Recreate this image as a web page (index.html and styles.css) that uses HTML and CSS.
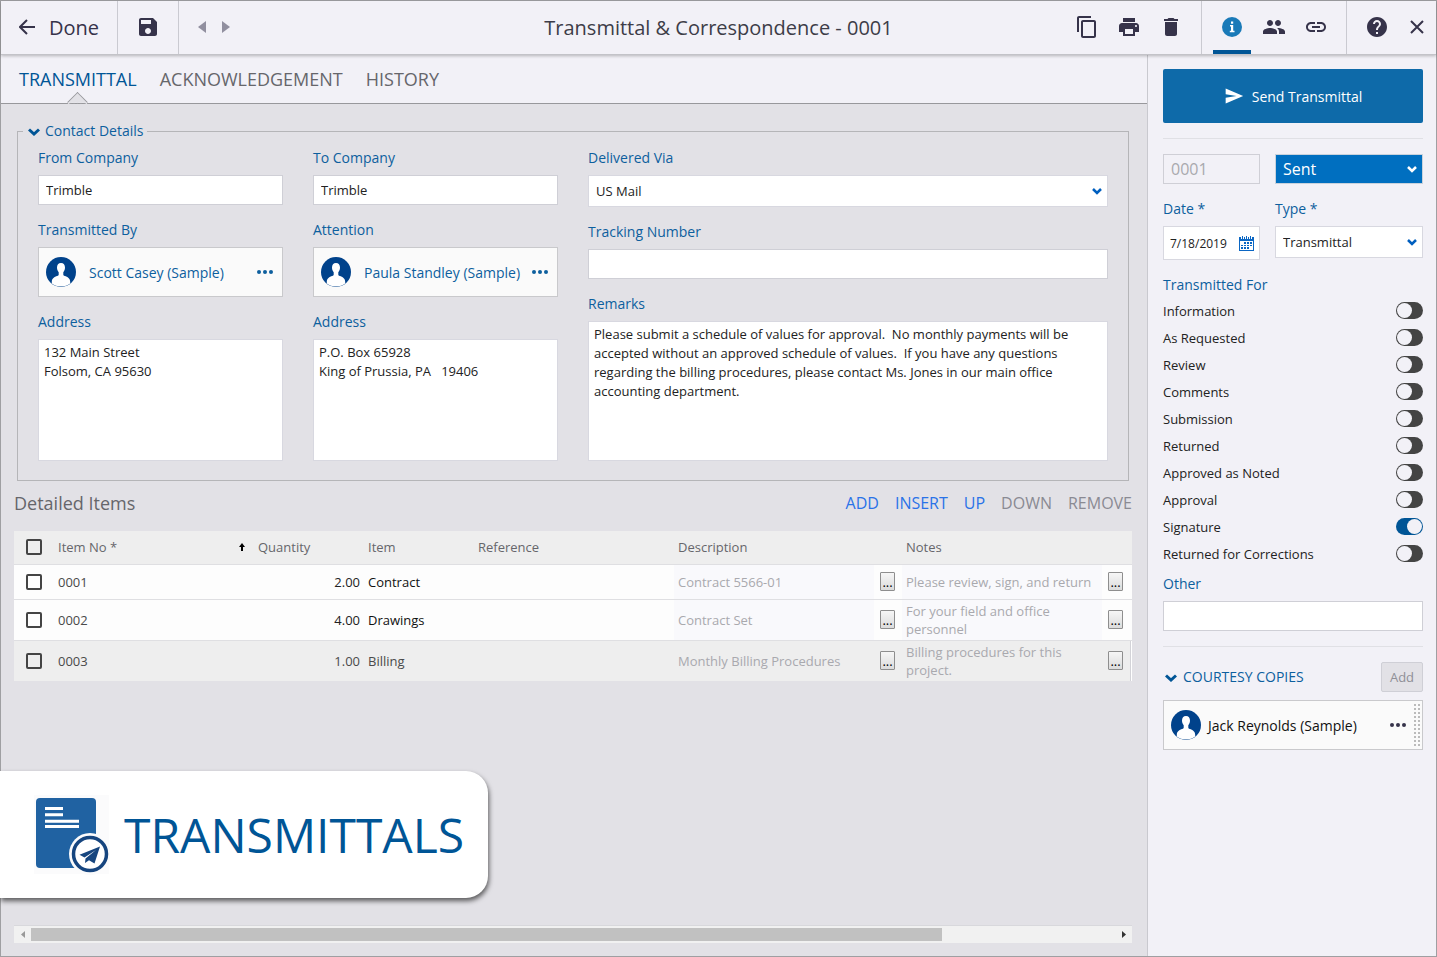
FILE: index.html
```html
<!DOCTYPE html>
<html lang="en">
<head>
  <meta charset="UTF-8">
  <title>Transmittal &amp; Correspondence - 0001</title>
  <link rel="stylesheet" href="styles.css">
</head>
<body>
  <svg class="sprite" aria-hidden="true">
    <symbol id="avatar" viewBox="0 0 30 30">
      <circle cx="15" cy="15" r="15" fill="#00428b"/>
      <path fill="#fff" d="M15 6c-2.700 0-4 1.900-4 4.600 0 1.500.5 3.300 1.700 4.700v2.200c0 .8-.6 1.100-1.500 1.400-2.700.8-5.400 2.300-5.400 6v1.700C8.200 28.600 11.300 29.600 15 29.600s6.800-1 9.200-3v-1.700c0-3.700-2.700-5.200-5.400-6-.9-.3-1.500-.6-1.500-1.400v-2.200c1.200-1.400 1.700-3.200 1.700-4.700C19 7.900 17.700 6 15 6z"/>
    </symbol>
    <symbol id="dots" viewBox="0 0 16 4">
      <circle cx="2" cy="2" r="2"/><circle cx="8" cy="2" r="2"/><circle cx="14" cy="2" r="2"/>
    </symbol>
    <symbol id="chevron" viewBox="0 0 12 8">
      <path d="M1 1.500l5 4.500 5-4.500" fill="none" stroke="currentColor" stroke-width="3"/>
    </symbol>
  </svg>

  <div class="window">
    <header class="topbar">
      <div class="topbar-left">
        <button class="done">
          <svg width="16" height="16" viewBox="0 0 16 16"><path d="M8 1L1 8l7 7M1 8h15" fill="none" stroke="currentColor" stroke-width="2"/></svg>
          Done
        </button>
        <button class="save" aria-label="Save">
          <svg width="24" height="24" viewBox="0 0 24 24"><path d="M17 3H5c-1.110 0-2 .9-2 2v14c0 1.100.89 2 2 2h14c1.100 0 2-.9 2-2V7l-4-4zm-5 16c-1.660 0-3-1.340-3-3s1.340-3 3-3 3 1.340 3 3-1.340 3-3 3zm3-10H5V5h10v4z"/></svg>
        </button>
        <div class="pager">
          <button aria-label="Previous"><svg width="8" height="12" viewBox="0 0 8 12"><path d="M8 0v12L0 6z"/></svg></button>
          <button aria-label="Next"><svg width="8" height="12" viewBox="0 0 8 12"><path d="M0 0v12l8-6z"/></svg></button>
        </div>
      </div>
      <h1>Transmittal &amp; Correspondence - 0001</h1>
      <div class="topbar-right">
        <div class="tools">
          <button aria-label="Copy"><svg width="24" height="24" viewBox="0 0 24 24"><path d="M16 1H4c-1.100 0-2 .9-2 2v14h2V3h12V1zm3 4H8c-1.100 0-2 .9-2 2v14c0 1.100.9 2 2 2h11c1.100 0 2-.9 2-2V7c0-1.100-.9-2-2-2zm0 16H8V7h11v14z"/></svg></button>
          <button aria-label="Print"><svg width="24" height="24" viewBox="0 0 24 24"><path d="M19 8H5c-1.660 0-3 1.340-3 3v6h4v4h12v-4h4v-6c0-1.660-1.340-3-3-3zm-3 11H8v-5h8v5zm3-7c-.55 0-1-.45-1-1s.45-1 1-1 1 .45 1 1-.45 1-1 1zm-1-9H6v4h12V3z"/></svg></button>
          <button aria-label="Delete"><svg width="24" height="24" viewBox="0 0 24 24"><path d="M6 19c0 1.100.9 2 2 2h8c1.100 0 2-.9 2-2V7H6v12zM19 4h-3.500l-1-1h-5l-1 1H5v2h14V4z"/></svg></button>
        </div>
        <div class="tools">
          <button class="active" aria-label="Info"><svg width="24" height="24" viewBox="0 0 24 24"><circle cx="12" cy="12" r="10"/><path fill="#fff" d="M11 6.500h2.200v2.200H11zM10 10h3.200v5.800h1.300v1.400H9.800v-1.400H11v-4.400h-1z"/></svg></button>
          <button aria-label="People"><svg width="24" height="24" viewBox="0 0 24 24"><path d="M16 11c1.660 0 2.990-1.340 2.990-3S17.660 5 16 5c-1.660 0-3 1.340-3 3s1.340 3 3 3zm-8 0c1.660 0 2.990-1.340 2.990-3S9.660 5 8 5C6.340 5 5 6.340 5 8s1.340 3 3 3zm0 2c-2.330 0-7 1.170-7 3.500V19h14v-2.500c0-2.330-4.670-3.500-7-3.500zm8 0c-.29 0-.62.02-.97.05 1.160.84 1.970 1.970 1.970 3.450V19h6v-2.500c0-2.330-4.670-3.500-7-3.500z"/></svg></button>
          <button aria-label="Links"><svg width="24" height="24" viewBox="0 0 24 24"><path d="M3.900 12c0-1.710 1.390-3.100 3.100-3.100h4V7H7c-2.760 0-5 2.240-5 5s2.240 5 5 5h4v-1.900H7c-1.710 0-3.100-1.390-3.100-3.100zM8 13h8v-2H8v2zm9-6h-4v1.900h4c1.710 0 3.100 1.390 3.100 3.100s-1.390 3.100-3.100 3.100h-4V17h4c2.760 0 5-2.240 5-5s-2.240-5-5-5z"/></svg></button>
        </div>
        <div class="tools tools-end">
          <button aria-label="Help"><svg width="24" height="24" viewBox="0 0 24 24"><path d="M12 2C6.480 2 2 6.480 2 12s4.480 10 10 10 10-4.480 10-10S17.520 2 12 2zm1 17h-2v-2h2v2zm2.070-7.750l-.9.92C13.450 12.900 13 13.500 13 15h-2v-.5c0-1.100.45-2.100 1.170-2.830l1.240-1.260c.37-.36.59-.86.59-1.410 0-1.100-.9-2-2-2s-2 .9-2 2H8c0-2.210 1.790-4 4-4s4 1.790 4 4c0 .88-.36 1.680-.93 2.250z"/></svg></button>
          <button class="close" aria-label="Close"><svg width="14" height="14" viewBox="0 0 14 14"><path d="M1 1l12 12M13 1L1 13" fill="none" stroke="currentColor" stroke-width="2"/></svg></button>
        </div>
      </div>
    </header>

    <div class="body">
      <main>
        <nav class="tabs">
          <a href="#transmittal" class="current">TRANSMITTAL</a>
          <a href="#acknowledgement">ACKNOWLEDGEMENT</a>
          <a href="#history">HISTORY</a>
        </nav>

        <div class="content">
          <fieldset class="contact">
            <legend><svg class="chevron" width="12" height="8"><use href="#chevron"/></svg>Contact Details</legend>
            <div class="contact-grid">
              <div class="column">
                <div class="field">
                  <label for="fromCompany">From Company</label>
                  <input type="text" id="fromCompany" value="Trimble">
                </div>
                <div class="field">
                  <span class="label">Transmitted By</span>
                  <div class="person">
                    <svg width="30" height="30"><use href="#avatar"/></svg>
                    <a href="#scott">Scott Casey (Sample)</a>
                    <button aria-label="More"><svg width="16" height="4"><use href="#dots"/></svg></button>
                  </div>
                </div>
                <div class="field grow">
                  <label for="fromAddress">Address</label>
                  <textarea id="fromAddress">132 Main Street
Folsom, CA 95630</textarea>
                </div>
              </div>
              <div class="column">
                <div class="field">
                  <label for="toCompany">To Company</label>
                  <input type="text" id="toCompany" value="Trimble">
                </div>
                <div class="field">
                  <span class="label">Attention</span>
                  <div class="person">
                    <svg width="30" height="30"><use href="#avatar"/></svg>
                    <a href="#paula">Paula Standley (Sample)</a>
                    <button aria-label="More"><svg width="16" height="4"><use href="#dots"/></svg></button>
                  </div>
                </div>
                <div class="field grow">
                  <label for="toAddress">Address</label>
                  <textarea id="toAddress">P.O. Box 65928
King of Prussia, PA   19406</textarea>
                </div>
              </div>
              <div class="column">
                <div class="field">
                  <label for="via">Delivered Via</label>
                  <select id="via"><option>US Mail</option></select>
                </div>
                <div class="field">
                  <label for="tracking">Tracking Number</label>
                  <input type="text" id="tracking">
                </div>
                <div class="field grow">
                  <label for="remarks">Remarks</label>
                  <textarea id="remarks" class="remarks">Please submit a schedule of values for approval.  No monthly payments will be accepted without an approved schedule of values.  If you have any questions regarding the billing procedures, please contact Ms. Jones in our main office accounting department.</textarea>
                </div>
              </div>
            </div>
          </fieldset>

          <div class="items-head">
            <h2>Detailed Items</h2>
            <div class="actions">
              <button>ADD</button>
              <button>INSERT</button>
              <button>UP</button>
              <button disabled>DOWN</button>
              <button disabled>REMOVE</button>
            </div>
          </div>

          <table class="items">
            <colgroup>
              <col class="c-check"><col class="c-no"><col class="c-qty"><col class="c-item"><col class="c-ref"><col class="c-desc"><col>
            </colgroup>
            <thead>
              <tr>
                <th><input type="checkbox" aria-label="Select all"></th>
                <th><div class="sorted">Item No * <svg width="6" height="8" viewBox="0 0 6 8"><path d="M3 0l3 4H4v4H2V4H0z"/></svg></div></th>
                <th>Quantity</th>
                <th>Item</th>
                <th>Reference</th>
                <th>Description</th>
                <th>Notes</th>
              </tr>
            </thead>
            <tbody>
              <tr>
                <td><input type="checkbox" aria-label="Select 0001"></td>
                <td>0001</td>
                <td class="num">2.00</td>
                <td class="dark">Contract</td>
                <td></td>
                <td class="memo"><div>Contract 5566-01 <button aria-label="Edit description">...</button></div></td>
                <td class="memo"><div>Please review, sign, and return <button aria-label="Edit notes">...</button></div></td>
              </tr>
              <tr>
                <td><input type="checkbox" aria-label="Select 0002"></td>
                <td>0002</td>
                <td class="num">4.00</td>
                <td class="dark">Drawings</td>
                <td></td>
                <td class="memo"><div>Contract Set <button aria-label="Edit description">...</button></div></td>
                <td class="memo"><div>For your field and office personnel <button aria-label="Edit notes">...</button></div></td>
              </tr>
              <tr class="selected">
                <td><input type="checkbox" aria-label="Select 0003"></td>
                <td>0003</td>
                <td class="num">1.00</td>
                <td class="dark">Billing</td>
                <td></td>
                <td class="memo"><div>Monthly Billing Procedures <button aria-label="Edit description">...</button></div></td>
                <td class="memo"><div>Billing procedures for this project. <button aria-label="Edit notes">...</button></div></td>
              </tr>
            </tbody>
          </table>

          <div class="scroller">
            <button aria-label="Scroll left"><svg width="4" height="7" viewBox="0 0 4 7"><path fill="#999" d="M4 0v7L0 3.500z"/></svg></button>
            <div class="track"><div class="thumb"></div></div>
            <button aria-label="Scroll right"><svg width="4" height="7" viewBox="0 0 4 7"><path fill="#333" d="M0 0v7l4-3.500z"/></svg></button>
          </div>
        </div>
      </main>

      <aside>
        <button class="send">
          <svg width="20" height="20" viewBox="0 0 24 24"><path d="M2 21L23 12 2 3v7l13 2-13 2z"/></svg>
          Send Transmittal
        </button>
        <hr>
        <div class="pair status">
          <input type="text" value="0001" aria-label="Number" disabled>
          <select class="sent" aria-label="Status"><option>Sent</option></select>
        </div>
        <div class="pair">
          <div class="field">
            <label for="date">Date *</label>
            <div class="date">
              <input type="text" id="date" value="7/18/2019">
              <button aria-label="Pick a date">
                <svg width="15" height="15" viewBox="0 0 15 15">
                  <path fill="#0b66c3" d="M0 1h15v14H0z"/>
                  <path fill="#fff" d="M1 5h13v9H1zM2 0h3v1H2zM6 0h3v1H6zM10 0h3v1h-3zM2 1h1v2H2zM4 1h1v2H4zM6 1h1v2H6zM8 1h1v2H8zM10 1h1v2h-1zM12 1h1v2h-1z"/>
                  <path fill="#0b66c3" d="M3 0h1v2H3zM7 0h1v2H7zM11 0h1v2h-1zM5 6h2v2H5zM8 6h2v2H8zM11 6h2v2h-2zM2 9h2v1H2zM5 9h2v1H5zM8 9h2v1H8zM11 9h2v1h-2zM2 11h2v2H2zM5 11h2v2H5zM8 11h2v2H8z"/>
                </svg>
              </button>
            </div>
          </div>
          <div class="field">
            <label for="type">Type *</label>
            <select id="type"><option>Transmittal</option></select>
          </div>
        </div>

        <h3>Transmitted For</h3>
        <div class="toggles">
          <label>Information <input type="checkbox"></label>
          <label>As Requested <input type="checkbox"></label>
          <label>Review <input type="checkbox"></label>
          <label>Comments <input type="checkbox"></label>
          <label>Submission <input type="checkbox"></label>
          <label>Returned <input type="checkbox"></label>
          <label>Approved as Noted <input type="checkbox"></label>
          <label>Approval <input type="checkbox"></label>
          <label>Signature <input type="checkbox" checked></label>
          <label>Returned for Corrections <input type="checkbox"></label>
        </div>
        <div class="field">
          <label for="other">Other</label>
          <input type="text" id="other">
        </div>
        <hr>
        <div class="copies">
          <h3><svg class="chevron" width="12" height="8"><use href="#chevron"/></svg>COURTESY COPIES</h3>
          <button disabled>Add</button>
        </div>
        <div class="person copy">
          <svg width="30" height="30"><use href="#avatar"/></svg>
          <a href="#jack">Jack Reynolds (Sample)</a>
          <button aria-label="More"><svg width="16" height="4"><use href="#dots"/></svg></button>
          <span class="grip"></span>
        </div>
      </aside>
    </div>
  </div>

  <div class="banner">
    <svg width="76" height="80" viewBox="0 0 76 80">
      <path fill="#fbfbfc" d="M0 0h75v79H0z"/>
      <rect x="2" y="3" width="60" height="70" rx="4" fill="#2062a2"/>
      <path fill="none" stroke="#fff" stroke-width="3" d="M11 13.500h18M11 19.800h18M11 26.200h34M11 31.500h34"/>
      <circle cx="56" cy="59" r="21" fill="#fbfbfc"/>
      <circle cx="56" cy="59" r="16.500" fill="#fff" stroke="#16457f" stroke-width="3.500"/>
      <path fill="#16457f" d="M66 51.500L45.500 59.800l5 2.700L62 55l-10.500 8.500-.5 4.500 4-2.800 5.500 3.300z"/>
    </svg>
    TRANSMITTALS
  </div>
</body>
</html>
```
FILE: styles.css
```css
* {
  box-sizing: border-box;
}
body {
  margin: 0;
  font-family: "Open Sans", "Noto Sans", sans-serif;
  font-size: 13px;
  color: #222;
  background: #e2e1e6;
}
button, input, select, textarea {
  font: inherit;
  color: inherit;
  margin: 0;
}
button {
  padding: 0;
  border: none;
  background: none;
  cursor: pointer;
}
a {
  color: inherit;
  text-decoration: none;
}
svg {
  fill: currentColor;
  flex: none;
}
h1, h2, h3 {
  margin: 0;
  font-weight: 400;
}
.sprite {
  position: absolute;
  width: 0;
  height: 0;
}
.window {
  display: flex;
  flex-direction: column;
  min-height: 100vh;
  border: 1px solid #9f9fa2;
}

/* top bar */
.topbar {
  position: relative;
  z-index: 1;
  display: grid;
  grid-template-columns: 1fr auto 1fr;
  height: 54px;
  background: #f2f1f7;
  border-bottom: 1px solid #c3c3c8;
  box-shadow: 0 1px 3px rgba(0, 0, 0, 0.25);
  color: #36334a;
}
.topbar h1 {
  align-self: center;
  font-size: 20px;
  color: #3d3d48;
}
.topbar h1, .topbar button {
  padding-bottom: 1px;
}
.topbar-left, .topbar-right, .tools, .pager {
  display: flex;
}
.topbar-left > button {
  border-right: 1px solid #cacad1;
}
.topbar-right {
  justify-content: flex-end;
}
.topbar .done {
  display: flex;
  align-items: center;
  gap: 14px;
  padding: 0 18px 1px;
  font-size: 20px;
}
.save {
  width: 61px;
}
.save svg, .tools svg {
  display: block;
  margin: auto;
}
.pager {
  align-items: center;
  gap: 16px;
  padding-left: 19px;
  color: #918f9f;
}
.pager svg {
  display: block;
}
.tools {
  padding: 0 9px;
  border-right: 1px solid #cacad1;
}
.tools button {
  width: 42px;
}
.tools-end {
  padding-right: 0;
  border-right: none;
}
.tools .close {
  width: 38px;
}
.tools .active {
  position: relative;
  color: #1a7ab8;
}
.active::after {
  content: "";
  position: absolute;
  left: 2px;
  right: 2px;
  bottom: 0;
  height: 4px;
  background: #005596;
}

.body {
  display: flex;
  flex: 1;
}
main {
  flex: 1;
  display: flex;
  flex-direction: column;
}

/* tabs */
.tabs {
  display: flex;
  gap: 23px;
  height: 49px;
  padding: 0 18px;
  background: #f2f1f7;
  border-bottom: 1px solid #98989c;
  font-size: 18px;
  line-height: 48px;
  color: #66666b;
}
.tabs .current {
  position: relative;
  color: #005596;
}
.current::after {
  content: "";
  position: absolute;
  left: 50%;
  bottom: -7px;
  width: 13px;
  height: 13px;
  margin-left: -8px;
  background: linear-gradient(135deg, #e2e1e6 50%, transparent 50%);
  border: 1px solid #98989c;
  border-right-color: transparent;
  border-bottom-color: transparent;
  transform: rotate(45deg);
}

.content {
  flex: 1;
  display: flex;
  flex-direction: column;
  padding: 17px 15px 13px 13px;
}

/* contact details */
.contact {
  margin: 0 3px;
  padding: 7px 20px 19px;
  border: 1px solid #b5b5b8;
}
.contact legend {
  margin-left: -15px;
  padding: 0 4px 0 5px;
  font-size: 14px;
  line-height: 20px;
  color: #0d5f9e;
}
.chevron {
  margin-right: 5px;
  color: #005596;
}
.contact-grid {
  display: grid;
  grid-template-columns: 245fr 245fr 520fr;
  gap: 30px;
}
.column {
  display: flex;
  flex-direction: column;
  gap: 15px;
}
.field {
  display: flex;
  flex-direction: column;
  gap: 7px;
}
.field > label, .label, aside h3 {
  font-size: 14px;
  line-height: 20px;
  color: #0d5f9e;
}
.grow, .grow textarea {
  flex: 1;
}
input[type="text"], select, textarea {
  width: 100%;
  min-width: 0;
  border: 1px solid #cfcfd6;
  border-radius: 0;
  background: #fff;
}
input[type="text"] {
  height: 30px;
  padding: 0 7px;
}
select {
  height: 32px;
  padding: 0 7px;
  border-color: #d8d8e0;
  appearance: none;
  background: #fff url("data:image/svg+xml,%3Csvg xmlns='http://www.w3.org/2000/svg' width='10' height='7'%3E%3Cpath d='M1 1l4 4 4-4' fill='none' stroke='%23005fbf' stroke-width='2.500'/%3E%3C/svg%3E") no-repeat right 5px center;
}
textarea {
  display: block;
  min-height: 122px;
  padding: 3px 5px;
  line-height: 19px;
  border-color: #d8d8e0;
  resize: none;
}
.remarks {
  padding-right: 30px;
}
.person {
  display: flex;
  align-items: center;
  height: 50px;
  padding: 0 9px 0 7px;
  border: 1px solid #c9c9cc;
  background: #fafafa;
  font-size: 14px;
  color: #0d5f9e;
}
.person a {
  flex: 1;
  margin-left: 13px;
  white-space: nowrap;
}
.person button svg {
  display: block;
}

/* detailed items */
.items-head {
  display: flex;
  justify-content: space-between;
  align-items: center;
  height: 44px;
  margin-bottom: 6px;
}
.items-head h2 {
  font-size: 18px;
  color: #66666b;
}
.actions {
  display: flex;
  gap: 16px;
  font-size: 16px;
  color: #2a73e8;
}
.actions button:disabled {
  color: #8a8a93;
}
.items {
  width: 100%;
  table-layout: fixed;
  border-collapse: collapse;
  color: #4a4a4a;
}
.c-check { width: 36px; }
.c-no, .c-ref { width: 200px; }
.c-qty, .c-item { width: 110px; }
.c-desc { width: 228px; }
.items th, .items td {
  height: 35px;
  padding: 0 8px;
  text-align: left;
  font-weight: 400;
  line-height: 18px;
  border-bottom: 1px solid #dfdfe2;
  background: #fdfdfd;
}
.items th {
  height: 33px;
  background: #eee;
  color: #66666b;
}
.items th:first-child, .items td:first-child {
  padding: 0 0 0 12px;
}
.items input {
  display: block;
  width: 16px;
  height: 16px;
  appearance: none;
  border: 2px solid #444;
  border-radius: 2px;
}
.sorted {
  display: flex;
  justify-content: space-between;
  align-items: center;
}
.sorted svg {
  margin-right: -3px;
  color: #000;
}
.items .num {
  padding-right: 0;
  text-align: right;
  color: #222;
}
.items .dark {
  color: #111;
}
.items .memo {
  padding-right: 3px;
  background: linear-gradient(#f9f9fc, #f9f9fc) 4px 0 / 200px 100% no-repeat #fdfdfd;
  color: #a9a9ae;
}
.items .memo:last-child {
  padding-right: 9px;
}
.memo div {
  display: flex;
  align-items: center;
  justify-content: space-between;
  gap: 8px;
  min-height: 40px;
}
.items tr:first-child .memo div {
  min-height: 34px;
}
.memo button {
  flex: none;
  width: 15px;
  height: 19px;
  border: 1px solid #8e8e8e;
  border-radius: 1px;
  background: linear-gradient(#f6f6f6, #dcdcdc);
  color: #000;
}
.items .selected td {
  background: #eee;
  border-bottom: none;
  color: #4a4a4a;
}
.items .selected .memo {
  color: #a9a9ae;
}
.selected td:last-child {
  box-shadow: inset -1px 0 #fff, inset -2px 0 #d3d3d8;
}

.scroller {
  display: flex;
  align-items: center;
  height: 18px;
  margin-top: auto;
  background: #f1f1f1;
  border-top: 1px solid #d8d8dc;
}
.scroller button {
  width: 17px;
}
.scroller svg {
  display: block;
  margin: auto;
}
.track {
  flex: 1;
}
.thumb {
  width: 84%;
  height: 13px;
  background: #c1c1c1;
}

/* side panel */
aside {
  width: 289px;
  padding: 14px 13px 14px 15px;
  background: #f2f1f7;
  border-left: 1px solid #c9c9cf;
}
.send {
  display: flex;
  justify-content: center;
  align-items: center;
  gap: 8px;
  width: 100%;
  height: 54px;
  border-radius: 2px;
  background: #0e6aa9;
  color: #fff;
  font-size: 14px;
}
hr {
  margin: 15px 0;
  border: none;
  border-top: 1px solid #e0e0e5;
}
.pair {
  display: grid;
  grid-template-columns: 97fr 148fr;
  gap: 15px;
  margin-bottom: 15px;
}
.pair .field {
  min-width: 0;
}
.status {
  font-size: 16px;
}
.status input:disabled {
  background: #f2f1f7;
  color: #a9a9ae;
}
.status .sent {
  height: 30px;
  border-color: #c9d2dc;
  background-color: #006fc0;
  background-image: url("data:image/svg+xml,%3Csvg xmlns='http://www.w3.org/2000/svg' width='10' height='7'%3E%3Cpath d='M1 1l4 4 4-4' fill='none' stroke='%23fff' stroke-width='2.500'/%3E%3C/svg%3E");
  color: #fff;
}
.date {
  display: flex;
  align-items: center;
  height: 34px;
  padding-right: 5px;
  border: 1px solid #d8d8e0;
  background: #fff;
}
.date input[type="text"] {
  flex: 1;
  padding: 0 0 0 6px;
  border: none;
  font-size: 12px;
}
.date svg {
  display: block;
}
.toggles {
  margin: 2px 0 7px;
}
.toggles label {
  display: flex;
  justify-content: space-between;
  align-items: center;
  height: 27px;
}
.toggles input {
  position: relative;
  width: 27px;
  height: 17px;
  appearance: none;
  border-radius: 9px;
  background: #444;
}
.toggles input::before {
  content: "";
  position: absolute;
  left: 1px;
  top: 1px;
  width: 15px;
  height: 15px;
  border-radius: 50%;
  background: #f2f1f7;
}
.toggles input:checked {
  background: #005596;
}
.toggles input:checked::before {
  left: 11px;
}
.copies {
  display: flex;
  justify-content: space-between;
  align-items: center;
  margin-bottom: 8px;
}
.copies .chevron {
  margin: 0 6px 0 2px;
}
.copies button {
  width: 42px;
  height: 30px;
  border: 1px solid #cfcfd6;
  border-radius: 2px;
  background: #e2e1e6;
  color: #8f8f96;
}
.copy {
  padding-right: 2px;
  color: #111;
}
.copy a {
  margin-left: 7px;
}
.copy button {
  color: #36334a;
}
.grip {
  width: 6px;
  height: 42px;
  margin-left: 8px;
  background: conic-gradient(#fafafa 25%, #fafafa 75%, #bbb 75%) 0 0 / 4px 4px;
}

/* product label over the lower left corner */
.banner {
  position: absolute;
  z-index: 2;
  left: 0;
  bottom: 59px;
  display: flex;
  align-items: center;
  gap: 14px;
  height: 127px;
  padding: 0 24px 0 34px;
  border-radius: 0 22px 22px 0;
  background: #fff;
  box-shadow: 1px 3px 5px rgba(0, 0, 0, 0.6);
  color: #005596;
  font-size: 48px;
}
```
